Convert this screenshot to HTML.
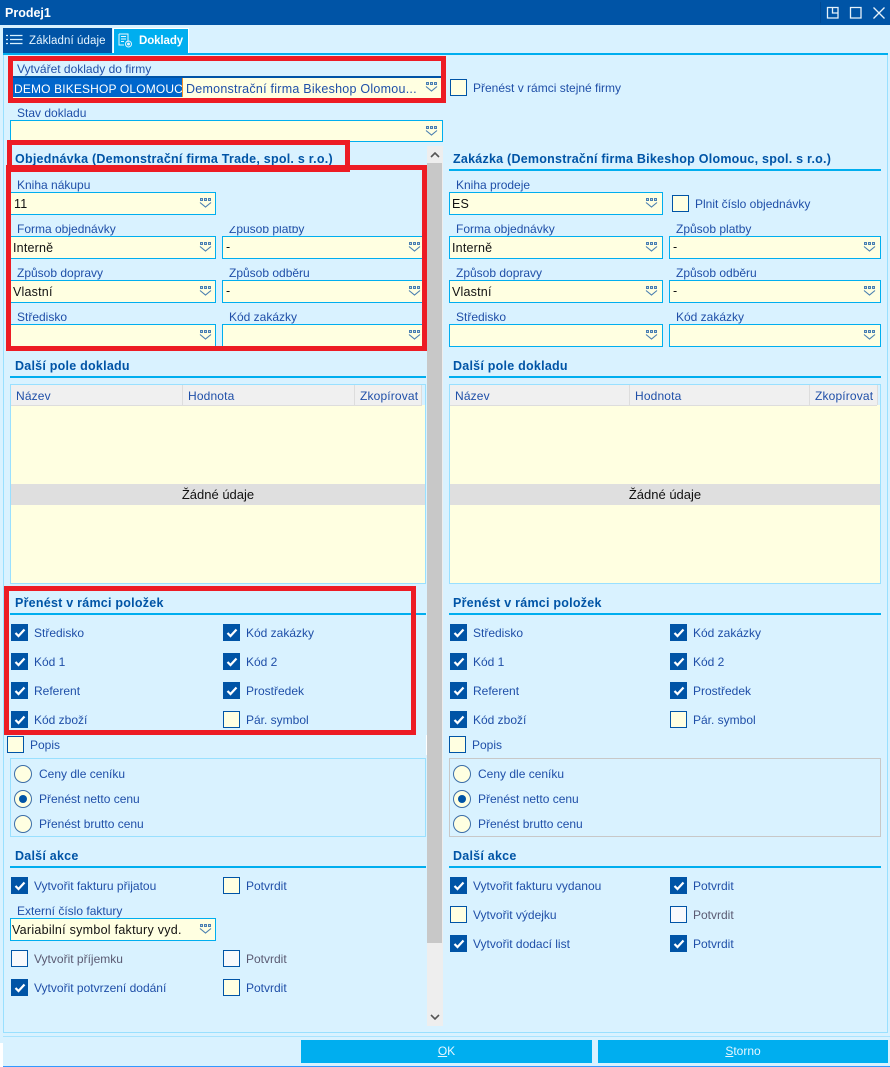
<!DOCTYPE html>
<html lang="cs"><head><meta charset="utf-8"><title>Prodej1</title>
<style>
html,body{margin:0;padding:0}
body{width:890px;height:1067px;position:relative;overflow:hidden;background:#D9F2FF;font:12px/16px "Liberation Sans",sans-serif;color:#1F4FA8}
div,span.a,svg.a{position:absolute;box-sizing:border-box}
.t{height:16px;white-space:nowrap;letter-spacing:0}
.n{letter-spacing:.15px}
.v{color:#111;font-size:12.5px;letter-spacing:.2px;height:16px;white-space:nowrap}
.h{height:16px;white-space:nowrap;font-weight:bold;color:#0054A6;letter-spacing:.24px;font-size:12.5px}
.l{height:2px;background:#00AEEF}
.f{background:#FFFFE1;border:1px solid #00AEEF}
.c{width:17px;height:17px;border:1px solid #0054A6;background:#FFFFE1}
.k{background:#0054A6}
.w{background:#F8F9FC}
.r{width:18px;height:18px;border-radius:50%;border:1px solid #3C6EA8;background:#FFFFE1}
.r i{position:absolute;left:4px;top:4px;width:8px;height:8px;border-radius:50%;background:#0054A6}
.b{border:5px solid #ED1C24}
.th{background:#F0F0F0;border-bottom:1px solid #DDD;height:21px;top:385px}
.s{width:1px;background:#DDD;top:385px;height:20px}
.i{width:13px;height:11px}
svg{display:block}
</style></head><body>
<svg width="0" height="0" style="position:absolute"><defs>
<symbol id="dd" viewBox="0 0 13 11"><path d="M1 0h3v3H1zM5 0h3v3H5zM9 0h3v3H9z" fill="#4A7FB0"/><path d="M2.200 1h.8v1h-.8zM6.200 1h.8v1h-.8zM10.200 1h.8v1h-.8z" fill="#D9E8F2"/><path d="M1 4.500l5.500 4.500L12 4.500" fill="none" stroke="#4A7FB0" stroke-width="1.100"/></symbol>
<symbol id="ck" viewBox="0 0 17 17"><path d="M4.500 9l3 3 6-6.500" fill="none" stroke="#fff" stroke-width="2.200"/></symbol>
</defs></svg>

<!-- title bar -->
<div style="left:0;top:0;width:890px;height:25px;background:#0054A6"></div>
<div style="left:5px;top:5px;height:16px;color:#fff;font-weight:bold;font-size:12.5px">Prodej1</div>
<div style="left:820px;top:2px;width:1px;height:21px;background:#004A94"></div>
<svg class="a" style="left:826px;top:6px" width="60" height="14" viewBox="0 0 60 14" fill="none" stroke="#E6F2FA" stroke-width="1.300">
<path d="M1.500 1.500h10.500v10.500H1.500zM6.500 1.500v5.500h5.500"/>
<path d="M24.500 1.500h10.500v10.500H24.500z"/>
<path d="M47.500 1.500l11 11M58.500 1.500l-11 11"/></svg>

<!-- tabs -->
<div style="left:3px;top:28px;width:109px;height:25px;background:#0054A6"></div>
<div style="left:113px;top:28px;width:76px;height:25px;background:#00AEEF;border:1px solid #fff;border-bottom:0"></div>
<svg class="a" style="left:6px;top:34px" width="17" height="12" viewBox="0 0 17 12" stroke="#D9F2FF" stroke-width="1.200"><path d="M4 1.500h12.500M4 5.500h12.500M4 9.500h12.500"/><path d="M0 1.500h2M0 5.500h2M0 9.500h2" stroke-width="1.200"/></svg>
<svg class="a" style="left:118px;top:33px" width="15" height="15" viewBox="0 0 15 15" fill="none" stroke="#E8F6FE" stroke-width="1"><path d="M1 1h9v8M1 1v11h5M3 3.500h5M3 6h5M3 8.500h3"/><circle cx="10.500" cy="11" r="3"/><circle cx="10.500" cy="11" r="1" fill="#E8F6FE"/></svg>
<div style="left:29px;top:33px;height:16px;color:#E6F5FF;white-space:nowrap;font-size:11.5px;letter-spacing:.08px">Základní údaje</div>
<div style="left:139px;top:33px;height:16px;color:#fff;font-weight:bold;font-size:11.5px;letter-spacing:-.1px">Doklady</div>

<!-- frame -->
<div style="left:3px;top:53px;width:885px;height:2px;background:#00AEEF"></div>
<div style="left:3px;top:55px;width:1px;height:978px;background:#99E0FF"></div>
<div style="left:887px;top:55px;width:1px;height:978px;background:#99E0FF"></div>
<div style="left:3px;top:1032px;width:885px;height:1px;background:#99E0FF"></div>
<div style="left:3px;top:1036px;width:887px;height:1px;background:#A8E4FF"></div>
<div style="left:0;top:1043px;width:3px;height:24px;background:#fff"></div>
<div style="left:3px;top:1066px;width:887px;height:1px;background:#3399FF"></div>

<!-- top -->
<div style="left:13px;top:76px;width:428px;height:2px;background:#0054A6"></div>
<div style="left:13px;top:78px;width:428px;height:20px;background:#FFFFE1"></div>
<div style="left:13px;top:78px;width:169px;height:19px;background:#0066CC"></div>
<div style="left:182px;top:78px;width:1px;height:19px;background:#F28C28"></div>
<div class="t" style="left:17px;top:61px">Vytvářet doklady do firmy</div>
<div style="left:14px;top:81px;width:168px;height:16px;overflow:hidden;color:#fff;white-space:nowrap;font-size:12px;letter-spacing:.15px">DEMO BIKESHOP OLOMOUC</div>
<div class="t" style="left:186px;top:81px;font-size:12.5px;letter-spacing:.25px">Demonstrační firma Bikeshop Olomou...</div>
<svg class="a i" style="left:425px;top:82px"><use href="#dd"/></svg>
<div class="c" style="left:450px;top:79px"></div>
<div class="t" style="left:473px;top:80px">Přenést v rámci stejné firmy</div>

<div class="t" style="left:17px;top:105px">Stav dokladu</div>
<div class="f" style="left:10px;top:120px;width:433px;height:22px"></div>
<svg class="a i" style="left:425px;top:126px"><use href="#dd"/></svg>

<!-- scrollbar -->
<div style="left:427px;top:146px;width:16px;height:880px;background:#EEE"></div>
<div style="left:427px;top:163px;width:15px;height:780px;background:#C8C8C8"></div>
<div style="left:426px;top:735px;width:1px;height:20px;background:#fff"></div>
<svg class="a" style="left:430px;top:152px" width="10" height="6" viewBox="0 0 10 6" fill="none" stroke="#555" stroke-width="1.600"><path d="M1 5l4-4 4 4"/></svg>
<svg class="a" style="left:430px;top:1014px" width="10" height="6" viewBox="0 0 10 6" fill="none" stroke="#555" stroke-width="1.600"><path d="M1 1l4 4 4-4"/></svg>

<!-- headings -->
<div class="h" style="left:15px;top:151px">Objednávka (Demonstrační firma Trade, spol. s r.o.)</div>
<div class="h" style="left:453px;top:151px">Zakázka (Demonstrační firma Bikeshop Olomouc, spol. s r.o.)</div>
<div class="l" style="left:449px;top:169px;width:432px"></div>

<!-- left fields -->
<div class="t" style="left:17px;top:177px">Kniha nákupu</div>
<div class="f" style="left:10px;top:192px;width:206px;height:23px"></div>
<div class="v" style="left:14px;top:196px">11</div>
<svg class="a i" style="left:199px;top:198px"><use href="#dd"/></svg>

<div class="t" style="left:17px;top:221px">Forma objednávky</div>
<div class="t" style="left:229px;top:221px">Způsob platby</div>
<div style="left:226px;top:220px;width:90px;height:6px;background:#D9F2FF"></div>
<div class="f" style="left:10px;top:236px;width:206px;height:23px"></div>
<div class="f" style="left:222px;top:236px;width:204px;height:23px"></div>
<div class="v" style="left:13px;top:240px">Interně</div>
<div class="v" style="left:226px;top:239px">-</div>
<svg class="a i" style="left:199px;top:242px"><use href="#dd"/></svg>
<svg class="a i" style="left:408px;top:242px"><use href="#dd"/></svg>

<div class="t" style="left:17px;top:265px">Způsob dopravy</div>
<div class="t" style="left:229px;top:265px">Způsob odběru</div>
<div class="f" style="left:10px;top:280px;width:206px;height:23px"></div>
<div class="f" style="left:222px;top:280px;width:204px;height:23px"></div>
<div class="v" style="left:13px;top:284px">Vlastní</div>
<div class="v" style="left:226px;top:283px">-</div>
<svg class="a i" style="left:199px;top:286px"><use href="#dd"/></svg>
<svg class="a i" style="left:408px;top:286px"><use href="#dd"/></svg>

<div class="t" style="left:17px;top:309px">Středisko</div>
<div class="t" style="left:229px;top:309px">Kód zakázky</div>
<div class="f" style="left:10px;top:324px;width:206px;height:23px"></div>
<div class="f" style="left:222px;top:324px;width:204px;height:23px"></div>
<svg class="a i" style="left:199px;top:330px"><use href="#dd"/></svg>
<svg class="a i" style="left:408px;top:330px"><use href="#dd"/></svg>

<!-- right fields -->
<div class="t" style="left:456px;top:177px">Kniha prodeje</div>
<div class="f" style="left:449px;top:192px;width:214px;height:23px"></div>
<div class="v" style="left:452px;top:196px">ES</div>
<svg class="a i" style="left:645px;top:198px"><use href="#dd"/></svg>
<div class="c" style="left:672px;top:195px"></div>
<div class="t" style="left:695px;top:196px">Plnit číslo objednávky</div>

<div class="t" style="left:456px;top:221px">Forma objednávky</div>
<div class="t" style="left:676px;top:221px">Způsob platby</div>
<div class="f" style="left:449px;top:236px;width:214px;height:23px"></div>
<div class="f" style="left:669px;top:236px;width:212px;height:23px"></div>
<div class="v" style="left:452px;top:240px">Interně</div>
<div class="v" style="left:673px;top:239px">-</div>
<svg class="a i" style="left:645px;top:242px"><use href="#dd"/></svg>
<svg class="a i" style="left:863px;top:242px"><use href="#dd"/></svg>

<div class="t" style="left:456px;top:265px">Způsob dopravy</div>
<div class="t" style="left:676px;top:265px">Způsob odběru</div>
<div class="f" style="left:449px;top:280px;width:214px;height:23px"></div>
<div class="f" style="left:669px;top:280px;width:212px;height:23px"></div>
<div class="v" style="left:452px;top:284px">Vlastní</div>
<div class="v" style="left:673px;top:283px">-</div>
<svg class="a i" style="left:645px;top:286px"><use href="#dd"/></svg>
<svg class="a i" style="left:863px;top:286px"><use href="#dd"/></svg>

<div class="t" style="left:456px;top:309px">Středisko</div>
<div class="t" style="left:676px;top:309px">Kód zakázky</div>
<div class="f" style="left:449px;top:324px;width:214px;height:23px"></div>
<div class="f" style="left:669px;top:324px;width:212px;height:23px"></div>
<svg class="a i" style="left:645px;top:330px"><use href="#dd"/></svg>
<svg class="a i" style="left:863px;top:330px"><use href="#dd"/></svg>

<!-- dalsi pole -->
<div class="h" style="left:15px;top:358px">Další pole dokladu</div>
<div class="h" style="left:453px;top:358px">Další pole dokladu</div>
<div class="l" style="left:10px;top:376px;width:416px"></div>
<div class="l" style="left:449px;top:376px;width:432px"></div>

<div style="left:10px;top:384px;width:416px;height:200px;background:#FFFFE1;border:1px solid #99E0FF"></div>
<div style="left:449px;top:384px;width:432px;height:200px;background:#FFFFE1;border:1px solid #99E0FF"></div>
<div style="left:422px;top:385px;width:3px;height:20px;background:#D9F2FF"></div>
<div style="left:877px;top:385px;width:3px;height:20px;background:#D9F2FF"></div>
<div class="th" style="left:11px;width:411px"></div>
<div class="th" style="left:450px;width:427px"></div>
<div class="s" style="left:182px"></div><div class="s" style="left:354px"></div><div class="s" style="left:421px"></div>
<div class="s" style="left:629px"></div><div class="s" style="left:809px"></div><div class="s" style="left:877px"></div>
<div class="t n" style="left:16px;top:388px">Název</div>
<div class="t n" style="left:188px;top:388px">Hodnota</div>
<div class="t n" style="left:360px;top:388px">Zkopírovat</div>
<div class="t n" style="left:455px;top:388px">Název</div>
<div class="t n" style="left:635px;top:388px">Hodnota</div>
<div class="t n" style="left:815px;top:388px">Zkopírovat</div>
<div style="left:11px;top:484px;width:414px;height:21px;background:#DFDFDF"></div>
<div style="left:450px;top:484px;width:430px;height:21px;background:#DFDFDF"></div>
<div style="left:11px;top:487px;width:414px;height:16px;text-align:center;color:#111;font-size:13px">Žádné údaje</div>
<div style="left:450px;top:487px;width:430px;height:16px;text-align:center;color:#111;font-size:13px">Žádné údaje</div>

<!-- prenest -->
<div class="h" style="left:15px;top:595px">Přenést v rámci položek</div>
<div class="h" style="left:453px;top:595px">Přenést v rámci položek</div>
<div class="l" style="left:10px;top:613px;width:416px"></div>
<div class="l" style="left:449px;top:613px;width:432px"></div>

<div class="c k" style="left:11px;top:624px"><svg width="17" height="17" style="margin:-1px"><use href="#ck"/></svg></div>
<div class="t" style="left:34px;top:625px">Středisko</div>
<div class="c k" style="left:223px;top:624px"><svg width="17" height="17" style="margin:-1px"><use href="#ck"/></svg></div>
<div class="t" style="left:246px;top:625px">Kód zakázky</div>
<div class="c k" style="left:11px;top:653px"><svg width="17" height="17" style="margin:-1px"><use href="#ck"/></svg></div>
<div class="t" style="left:34px;top:654px">Kód 1</div>
<div class="c k" style="left:223px;top:653px"><svg width="17" height="17" style="margin:-1px"><use href="#ck"/></svg></div>
<div class="t" style="left:246px;top:654px">Kód 2</div>
<div class="c k" style="left:11px;top:682px"><svg width="17" height="17" style="margin:-1px"><use href="#ck"/></svg></div>
<div class="t" style="left:34px;top:683px">Referent</div>
<div class="c k" style="left:223px;top:682px"><svg width="17" height="17" style="margin:-1px"><use href="#ck"/></svg></div>
<div class="t" style="left:246px;top:683px">Prostředek</div>
<div class="c k" style="left:11px;top:711px"><svg width="17" height="17" style="margin:-1px"><use href="#ck"/></svg></div>
<div class="t" style="left:34px;top:712px">Kód zboží</div>
<div class="c" style="left:223px;top:711px"></div>
<div class="t" style="left:246px;top:712px">Pár. symbol</div>
<div class="c" style="left:7px;top:736px"></div>
<div class="t" style="left:30px;top:737px">Popis</div>

<div class="c k" style="left:450px;top:624px"><svg width="17" height="17" style="margin:-1px"><use href="#ck"/></svg></div>
<div class="t" style="left:473px;top:625px">Středisko</div>
<div class="c k" style="left:670px;top:624px"><svg width="17" height="17" style="margin:-1px"><use href="#ck"/></svg></div>
<div class="t" style="left:693px;top:625px">Kód zakázky</div>
<div class="c k" style="left:450px;top:653px"><svg width="17" height="17" style="margin:-1px"><use href="#ck"/></svg></div>
<div class="t" style="left:473px;top:654px">Kód 1</div>
<div class="c k" style="left:670px;top:653px"><svg width="17" height="17" style="margin:-1px"><use href="#ck"/></svg></div>
<div class="t" style="left:693px;top:654px">Kód 2</div>
<div class="c k" style="left:450px;top:682px"><svg width="17" height="17" style="margin:-1px"><use href="#ck"/></svg></div>
<div class="t" style="left:473px;top:683px">Referent</div>
<div class="c k" style="left:670px;top:682px"><svg width="17" height="17" style="margin:-1px"><use href="#ck"/></svg></div>
<div class="t" style="left:693px;top:683px">Prostředek</div>
<div class="c k" style="left:450px;top:711px"><svg width="17" height="17" style="margin:-1px"><use href="#ck"/></svg></div>
<div class="t" style="left:473px;top:712px">Kód zboží</div>
<div class="c" style="left:670px;top:711px"></div>
<div class="t" style="left:693px;top:712px">Pár. symbol</div>
<div class="c" style="left:449px;top:736px"></div>
<div class="t" style="left:472px;top:737px">Popis</div>

<!-- radios -->
<div style="left:10px;top:758px;width:416px;height:79px;border:1px solid #99E0FF"></div>
<div style="left:449px;top:758px;width:432px;height:79px;border:1px solid #C8C8C8"></div>
<div class="r" style="left:14px;top:765px"></div>
<div class="t" style="left:39px;top:766px">Ceny dle ceníku</div>
<div class="r" style="left:14px;top:790px"><i></i></div>
<div class="t" style="left:39px;top:791px">Přenést netto cenu</div>
<div class="r" style="left:14px;top:815px"></div>
<div class="t" style="left:39px;top:816px">Přenést brutto cenu</div>
<div class="r" style="left:453px;top:765px"></div>
<div class="t" style="left:478px;top:766px">Ceny dle ceníku</div>
<div class="r" style="left:453px;top:790px"><i></i></div>
<div class="t" style="left:478px;top:791px">Přenést netto cenu</div>
<div class="r" style="left:453px;top:815px"></div>
<div class="t" style="left:478px;top:816px">Přenést brutto cenu</div>

<!-- dalsi akce -->
<div class="h" style="left:15px;top:848px">Další akce</div>
<div class="h" style="left:453px;top:848px">Další akce</div>
<div class="l" style="left:10px;top:866px;width:416px"></div>
<div class="l" style="left:449px;top:866px;width:432px"></div>

<div class="c k" style="left:11px;top:877px"><svg width="17" height="17" style="margin:-1px"><use href="#ck"/></svg></div>
<div class="t" style="left:34px;top:878px">Vytvořit fakturu přijatou</div>
<div class="c" style="left:223px;top:877px"></div>
<div class="t" style="left:246px;top:878px">Potvrdit</div>
<div class="t" style="left:17px;top:903px">Externí číslo faktury</div>
<div class="f" style="left:10px;top:918px;width:206px;height:23px"></div>
<div class="v" style="left:12px;top:922px;letter-spacing:.27px">Variabilní symbol faktury vyd.</div>
<svg class="a i" style="left:199px;top:924px"><use href="#dd"/></svg>
<div class="c w" style="left:11px;top:950px"></div>
<div class="t" style="left:34px;top:951px;color:#5A5A72">Vytvořit příjemku</div>
<div class="c w" style="left:223px;top:950px"></div>
<div class="t" style="left:246px;top:951px;color:#5A5A72">Potvrdit</div>
<div class="c k" style="left:11px;top:979px"><svg width="17" height="17" style="margin:-1px"><use href="#ck"/></svg></div>
<div class="t" style="left:34px;top:980px">Vytvořit potvrzení dodání</div>
<div class="c" style="left:223px;top:979px"></div>
<div class="t" style="left:246px;top:980px">Potvrdit</div>

<div class="c k" style="left:450px;top:877px"><svg width="17" height="17" style="margin:-1px"><use href="#ck"/></svg></div>
<div class="t" style="left:473px;top:878px">Vytvořit fakturu vydanou</div>
<div class="c k" style="left:670px;top:877px"><svg width="17" height="17" style="margin:-1px"><use href="#ck"/></svg></div>
<div class="t" style="left:693px;top:878px">Potvrdit</div>
<div class="c" style="left:450px;top:906px"></div>
<div class="t" style="left:473px;top:907px">Vytvořit výdejku</div>
<div class="c w" style="left:670px;top:906px"></div>
<div class="t" style="left:693px;top:907px;color:#5A5A72">Potvrdit</div>
<div class="c k" style="left:450px;top:935px"><svg width="17" height="17" style="margin:-1px"><use href="#ck"/></svg></div>
<div class="t" style="left:473px;top:936px">Vytvořit dodací list</div>
<div class="c k" style="left:670px;top:935px"><svg width="17" height="17" style="margin:-1px"><use href="#ck"/></svg></div>
<div class="t" style="left:693px;top:936px">Potvrdit</div>

<!-- buttons -->
<div style="left:301px;top:1040px;width:291px;height:23px;background:#00AEEF;color:#E6F7FF;text-align:center;line-height:23px"><u>O</u>K</div>
<div style="left:598px;top:1040px;width:290px;height:23px;background:#00AEEF;color:#E6F7FF;text-align:center;line-height:23px"><u>S</u>torno</div>

<!-- red annotation boxes -->
<div class="b" style="left:8px;top:56px;width:438px;height:47px"></div>
<div class="b" style="left:7px;top:140px;width:343px;height:32px;border-bottom-width:7px"></div>
<div class="b" style="left:6px;top:165px;width:421px;height:186px"></div>
<div class="b" style="left:4px;top:586px;width:412px;height:149px"></div>
</body></html>
